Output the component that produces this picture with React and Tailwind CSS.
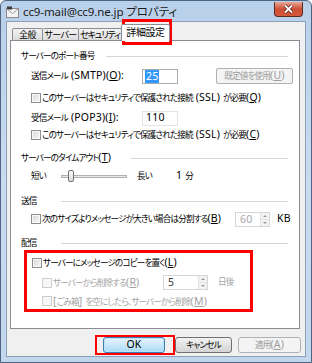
import React from 'react';

const font = "font-['Noto_Sans','Noto_Sans_CJK_JP',sans-serif] [font-feature-settings:'palt']";

// latin runs are set a little larger than the kana, as the UI font does
function L({ children }) {
    return <span className="text-[10.5px] tracking-[0.2px]">{children}</span>;
}

function Check({ disabled }) {
    return (
        <span
            className={
                disabled
                    ? "w-[10px] h-[10px] shrink-0 border border-[#cdcdcd] bg-[#f7f7f7]"
                    : "w-[10px] h-[10px] shrink-0 border border-[#8e8f8f] bg-gradient-to-br from-[#d4d6d9] to-[#fafafa] shadow-[inset_0_0_0_1px_#f7f7f7]"
            }
        />
    );
}

function Heading({ label, w }) {
    return (
        <div className="flex items-center h-4 pr-[11px]">
            <span className="shrink-0" style={{ width: w }}>{label}</span>
            <span className="flex-1 h-px bg-[#d5d5d5]" />
        </div>
    );
}

function Spin({ value, w, dim }) {
    return (
        <div className="flex h-[15px] border border-[#d6d6d6] bg-white" style={{ width: w }}>
            <span className={dim ? "flex-1 pl-[4px] leading-[13px] text-[#a8a8a8]" : "flex-1 pl-[4px] leading-[13px] text-[#3a3a3a]"}><L>{value}</L></span>
            <div className="w-[9px] flex flex-col border-l border-[#e2e2e2]">
                <span className="flex-1 flex items-center justify-center bg-[#f3f3f3] border-b border-[#e2e2e2]">
                    <span className="w-0 h-0 border-x-[2px] border-x-transparent border-b-[2px] border-b-[#9a9a9a]" />
                </span>
                <span className="flex-1 flex items-center justify-center bg-[#f3f3f3]">
                    <span className="w-0 h-0 border-x-[2px] border-x-transparent border-t-[2px] border-t-[#9a9a9a]" />
                </span>
            </div>
        </div>
    );
}

export default function App() {
    return (
        <div className={`relative w-[312px] h-[363px] overflow-hidden whitespace-nowrap text-[8.6px] tracking-[-0.85px] text-black ${font}`}>
            {/* window frame */}
            <div className="w-[312px] h-[363px] rounded-t-[6px] border border-[#4d6582] bg-gradient-to-b from-[#b9d0ea] via-[#c9dbef] to-[#c2d6ec] flex flex-col">
                {/* title bar */}
                <div className="h-[20px] flex items-center relative">
                    <svg className="ml-[5px] mt-[1px]" width="13" height="12" viewBox="0 0 13 12">
                        <rect x="0.5" y="2.5" width="12" height="9" fill="#f4f4f4" stroke="#8a8a8a" />
                        <rect x="1" y="0.5" width="5" height="3" fill="#3b3b3b" />
                        <path d="M1 3 L6.5 7.5 L12 3" fill="none" stroke="#9a9a9a" />
                    </svg>
                    <span className="ml-[4px] mt-[1px] text-[11.5px] text-[#1b1b1b] tracking-[-0.1px]">cc9-mail@cc9.ne.jp プロパティ</span>
                    <div className="ml-auto mr-[8px] -mt-[3px] w-[29px] h-[15px] rounded-b-[4px] border border-[#5b2a22] border-t-0 bg-gradient-to-b from-[#e7a898] via-[#cf4e36] to-[#d45a3c] flex items-center justify-center">
                        <svg width="11" height="10" viewBox="0 0 11 10">
                            <path d="M2 1.5 L9 8.5 M9 1.5 L2 8.5" stroke="#5a1c12" strokeWidth="3.2" />
                            <path d="M2 1.5 L9 8.5 M9 1.5 L2 8.5" stroke="#ffffff" strokeWidth="1.8" />
                        </svg>
                    </div>
                </div>

                {/* dialog body */}
                <div className="ml-[5px] w-[300px] h-[336px] border border-[#8ba0b8] bg-[#f0f0f0] flex flex-col">
                    {/* tabs */}
                    <div className="h-[18px] flex items-end pl-[4px] text-[9px] tracking-[-0.6px]">
                        <div className="ml-[1px] w-[31px] h-[12px] border border-b-0 border-[#898c95] rounded-t-[2px] bg-gradient-to-b from-[#f3f3f3] to-[#dcdcdc] flex items-center justify-center">全般</div>
                        <div className="w-[36px] h-[12px] border border-b-0 border-l-0 border-[#898c95] rounded-t-[2px] bg-gradient-to-b from-[#f3f3f3] to-[#dcdcdc] flex items-center justify-center">サーバー</div>
                        <div className="w-[43px] h-[12px] border border-b-0 border-l-0 border-[#898c95] rounded-t-[2px] bg-gradient-to-b from-[#f3f3f3] to-[#dcdcdc] flex items-center justify-center tracking-[-1.1px]">セキュリティ</div>
                        <div className="relative z-10 -ml-[1px] -mb-px w-[49px] h-[17px] border border-b-0 border-[#898c95] rounded-t-[2px] bg-white flex items-center justify-center pb-[1px] text-[10px] tracking-[-0.4px]">詳細設定</div>
                    </div>

                    {/* panel */}
                    <div className="ml-[3px] w-[290px] h-[289px] border border-[#898c95] bg-white pl-[10px] flex flex-col">
                        <div className="mt-[7px]"><Heading label="サーバーのポート番号" w={85} /></div>

                        <div className="mt-[4px] ml-[10px] h-4 flex items-center">
                            <span className="w-[111px]">送信メール<L> (SMTP)(<span className="underline">O</span>):</L></span>
                            <div className="w-[36px] h-[15px] border border-[#abadb3] bg-white flex items-center pl-[2px]">
                                <span className="bg-[#3399ff] text-white leading-[12px] px-px"><L>25</L></span>
                            </div>
                            <div className="ml-[38px] w-[77px] h-[16px] border border-[#adb2b5] rounded-[2px] bg-[#f4f4f4] text-[#9c9c9c] flex items-center justify-center">既定値を使用<L>(<span className="underline">U</span>)</L></div>
                        </div>

                        <div className="mt-[6px] ml-[10px] h-4 flex items-center gap-[1px]">
                            <Check />
                            <span>このサーバーはセキュリティで保護された接続<L> (SSL) </L>が必要<L>(<span className="underline">Q</span>)</L></span>
                        </div>

                        <div className="mt-[4px] ml-[10px] h-4 flex items-center">
                            <span className="w-[111px]">受信メール<L> (POP3)(<span className="underline">I</span>):</L></span>
                            <div className="w-[36px] h-[15px] border border-[#e3e3e3] bg-white flex items-center pl-[3px]"><L>110</L></div>
                        </div>

                        <div className="mt-[1px] ml-[10px] h-4 flex items-center gap-[1px]">
                            <Check />
                            <span>このサーバーはセキュリティで保護された接続<L> (SSL) </L>が必要<L>(<span className="underline">C</span>)</L></span>
                        </div>

                        <div className="mt-[7px]"><Heading label={<>サーバーのタイムアウト<L>(<span className="underline">T</span>)</L></>} w={110} /></div>

                        <div className="mt-[2px] ml-[10px] h-4 flex items-center">
                            <span className="w-[30px]">短い</span>
                            <div className="relative w-[66px] h-[12px] flex items-center">
                                <span className="w-full h-[3px] border border-[#b0b0b0] bg-[#e7eaea]" />
                                <span className="absolute left-[7px] top-0 w-[6px] h-[12px] rounded-[2px] border border-[#737373] bg-gradient-to-b from-[#fbfbfb] to-[#dcdcdc]" />
                            </div>
                            <span className="ml-[10px] w-[39px]">長い</span>
                            <span><L>1 </L>分</span>
                        </div>

                        <div className="mt-[9px]"><Heading label="送信" w={40} /></div>

                        <div className="mt-[2px] ml-[10px] h-4 flex items-center">
                            <Check />
                            <span className="ml-[1px] w-[193px]">次のサイズよりメッセージが大きい場合は分割する<L>(<span className="underline">B</span>)</L></span>
                            <Spin value="60" w={35} dim />
                            <span className="ml-[7px]"><L>KB</L></span>
                        </div>

                        <div className="mt-[9px] h-[14px] flex items-center pr-[11px]">
                            <span className="w-[40px] shrink-0">配信</span>
                            <span className="flex-1 h-px bg-[#d5d5d5]" />
                        </div>

                        {/* highlighted group */}
                        <div className="ml-[3px] w-[229px] h-[62px] border-[3px] border-[#ff0000] flex flex-col pl-[5px]">
                            <div className="mt-[2px] h-4 flex items-center gap-[1px]">
                                <Check />
                                <span>サーバーにメッセージのコピーを置く<L>(<span className="underline">L</span>)</L></span>
                            </div>
                            <div className="mt-[4px] ml-[10px] h-4 flex items-center text-[#a3a3a3]">
                                <Check disabled />
                                <span className="ml-[1px] w-[110px]">サーバーから削除する<L>(<span className="underline">R</span>)</L></span>
                                <Spin value="5" w={45} />
                                <span className="ml-[10px]">日後</span>
                            </div>
                            <div className="mt-[3px] ml-[10px] h-4 flex items-center gap-[1px] text-[#a3a3a3]">
                                <Check disabled />
                                <span><L>[</L>ごみ箱<L>] </L>を空にしたら、サーバーから削除<L>(<span className="underline">M</span>)</L></span>
                            </div>
                        </div>
                    </div>

                    {/* buttons */}
                    <div className="mt-[8px] flex items-center pl-[96px]">
                        <div className="relative w-[62px] h-[16px] rounded-[3px] border border-[#3c7fb1] bg-gradient-to-b from-[#eaf6fd] to-[#a7d9f5] shadow-[inset_0_0_0_1px_#bce4f9] flex items-center justify-center">
                            <L>OK</L>
                            <span className="absolute -left-[9px] -top-[3px] w-[80px] h-[20px] border-[2px] border-[#ff0000]" />
                        </div>
                        <div className="ml-[10px] w-[57px] h-[16px] rounded-[3px] border border-[#707070] bg-gradient-to-b from-[#f2f2f2] to-[#d4d4d4] flex items-center justify-center">キャンセル</div>
                        <div className="ml-[6px] w-[63px] h-[16px] rounded-[3px] border border-[#adb2b5] bg-[#f4f4f4] text-[#9c9c9c] flex items-center justify-center">適用<L>(<span className="underline">A</span>)</L></div>
                    </div>
                </div>
            </div>

            {/* annotation round the selected tab */}
            <span className="absolute left-[122px] top-[19px] w-[50px] h-[26px] border-[3px] border-[#ff0000]" />
        </div>
    );
}
